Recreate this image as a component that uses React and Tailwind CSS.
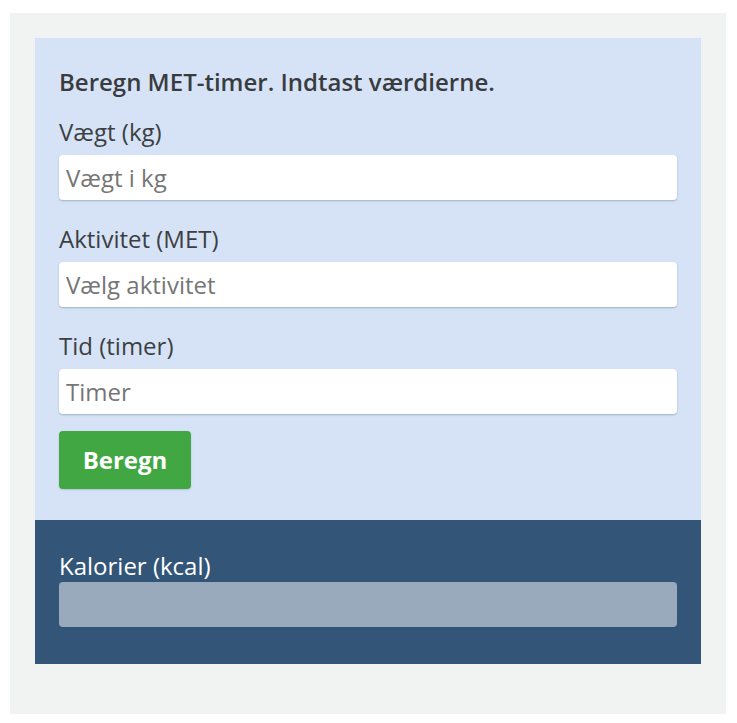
export default function App() {
  const font = { fontFamily: '"Open Sans", "Noto Sans", Arial, sans-serif' };
  const fields = [
    { label: "Vægt (kg)", ph: "Vægt i kg", mb: "mb-[23px]" },
    { label: "Aktivitet (MET)", ph: "Vælg aktivitet", mb: "mb-[23px]" },
    { label: "Tid (timer)", ph: "Timer", mb: "mb-[17px]" },
  ];
  return (
    <div className="bg-white min-h-screen pt-[13px] pl-[10px] pr-[11px]" style={font}>
      <div className="bg-[#f1f3f2] p-[25px] pb-[50px]">
        <div className="bg-[#d6e3f7] px-6 pt-[28px] pb-[31px]">
          <h1 className="text-[24px] leading-[32px] font-semibold text-[#393c3f] mb-[18px]">
            Beregn MET-timer. Indtast værdierne.
          </h1>
          {fields.map((f) => (
            <div key={f.label} className={f.mb}>
              <label className="block text-[24px] leading-[32px] text-[#3c3f42] mb-[7px]">
                {f.label}
              </label>
              <input
                type="text"
                placeholder={f.ph}
                className="block w-full h-[45px] bg-white rounded-[4px] px-[7px] text-[24px] leading-[32px] text-[#333] placeholder:text-[#767676] outline-none shadow-[0_1px_2px_rgba(60,80,120,0.35)]"
              />
            </div>
          ))}
          <button className="block h-[58px] w-[132px] rounded-[4px] bg-[#41a743] text-white text-[24px] font-bold leading-[58px] shadow-[0_1px_2px_rgba(0,0,0,0.15)]">
            Beregn
          </button>
        </div>
        <div className="bg-[#325578] px-6 pt-[30px] pb-[37px]">
          <div className="text-[24px] leading-[32px] text-white">Kalorier (kcal)</div>
          <div className="h-[45px] rounded-[4px] bg-white/50"></div>
        </div>
      </div>
    </div>
  );
}
